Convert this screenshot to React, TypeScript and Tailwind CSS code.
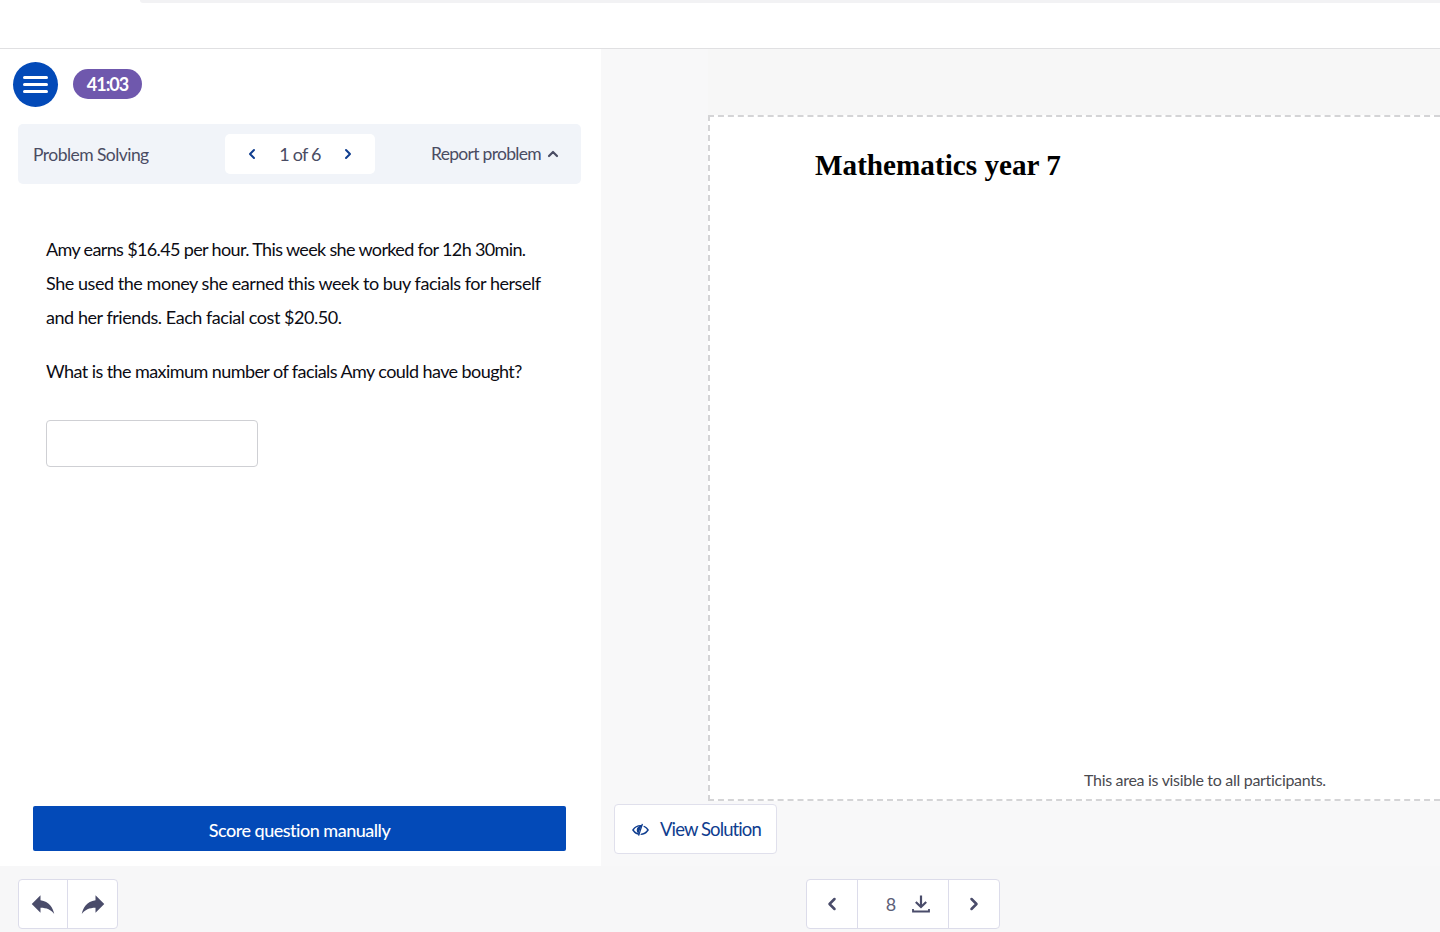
import { ChevronLeft, ChevronRight, ChevronUp } from 'lucide-react'

function EyeOff() {
  return (
    <svg width="17" height="14" viewBox="0 0 18 14" fill="none" className="text-[#0f3d8f]">
      <path d="M1 7c2-3 4.6-4.6 8-4.6S15 4 17 7c-2 3-4.6 4.6-8 4.6S3 10 1 7z" stroke="currentColor" strokeWidth="1.5" />
      <path d="M5 7c0-2.4 2-4.4 5-4.4L6.8 11C5.6 9.8 5 8.5 5 7z" fill="currentColor" />
      <path d="M12.2 1 8 12.5" stroke="white" strokeWidth="1.6" />
      <path d="M11 0.5 7 13" stroke="currentColor" strokeWidth="1.4" />
    </svg>
  )
}

function ReplyArrow({ flip }: { flip?: boolean }) {
  return (
    <svg width="30" height="30" viewBox="0 0 24 24" fill="currentColor" className={flip ? '-scale-x-100' : ''}>
      <path d="M10 9V5l-7 7 7 7v-4.1c5 0 8.5 1.6 11 5.1-1-5-4-10-11-11z" />
    </svg>
  )
}

function DownloadTray() {
  return (
    <svg width="18" height="18" viewBox="0 0 18 18" fill="none" stroke="currentColor">
      <path d="M9 0.5v11" strokeWidth="2.2" />
      <path d="M3.8 7 9 12l5.2-5" strokeWidth="2.2" />
      <path d="M1 14v2.5h16V14" strokeWidth="1.8" />
    </svg>
  )
}

function Sidebar() {
  return (
    <div className="flex h-[817px] w-[601px] shrink-0 flex-col bg-white">
      <div className="flex items-center pl-[13px] pt-[13px]">
        <button type="button" className="flex h-[45px] w-[45px] flex-col items-center justify-center gap-[4px] rounded-full bg-[#034ab8]">
          <span className="h-[3px] w-[25px] rounded-full bg-white" />
          <span className="h-[3px] w-[25px] rounded-full bg-white" />
          <span className="h-[3px] w-[25px] rounded-full bg-white" />
        </button>
        <span className="-mt-px ml-[15px] flex h-[30px] w-[69px] items-center justify-center rounded-full bg-[#6f58ad] text-[18px] font-bold tracking-[-1px] text-white">
          41:03
        </span>
      </div>

      <div className="ml-[18px] mt-[17px] flex h-[60px] w-[563px] items-center rounded-[5px] bg-[#f1f4f9] pl-[15px] pr-[20px] text-[17.5px] text-[#4a4c63]">
        <span className="w-[192px] pt-[2px] tracking-[-0.55px]">Problem Solving</span>
        <div className="flex h-[40px] w-[150px] items-center justify-between rounded-[5px] bg-white px-[19px]">
          <ChevronLeft size={16} strokeWidth={3} className="text-[#0f3d8f]" />
          <span className="text-[18px] tracking-[-0.8px]">1 of 6</span>
          <ChevronRight size={16} strokeWidth={3} className="text-[#0f3d8f]" />
        </div>
        <span className="ml-auto flex items-center gap-[4px] tracking-[-0.7px]">
          Report problem
          <ChevronUp size={16} strokeWidth={3.2} />
        </span>
      </div>

      <div className="pl-[46px] pt-[48px] text-[18px] tracking-[-0.45px] text-[#0c0c14]">
        <p className="leading-[34px]">
          <span className="tracking-[-0.64px]">Amy earns $16.45 per hour. This week she worked for 12h 30min.</span>
          <br />
          She used the money she earned this week to buy facials for herself
          <br />
          and her friends. Each facial cost $20.50.
        </p>
        <p className="mt-[20px] leading-[34px] tracking-[-0.57px]">What is the maximum number of facials Amy could have bought?</p>
        <input type="text" className="mt-[32px] block h-[47px] w-[212px] rounded-[4px] border border-[#cfd0d4] bg-white" />
      </div>

      <button
        type="button"
        className="mb-[15px] ml-[33px] mt-auto h-[45px] w-[533px] rounded-[2px] bg-[#034ab8] pt-[3px] text-[18px] font-medium tracking-[-0.5px] text-white"
      >
        Score question manually
      </button>
    </div>
  )
}

function Canvas() {
  return (
    <div className="flex min-w-0 flex-1 flex-col bg-[#f8f8f9]">
      <div className="ml-[107px] h-[66px] bg-[#f7f7f7]" />
      <div className="ml-[107px] flex h-[686px] flex-col border-2 border-r-0 border-dashed border-[#d4d4d6] bg-white">
        <h1 className="pl-[105px] pt-[30px] font-['Liberation_Serif',serif] text-[29.2px] font-bold leading-[36px] text-black">
          Mathematics year 7
        </h1>
        <p className="mb-[8px] mt-auto pl-[374px] text-[16px] leading-[22px] tracking-[-0.3px] text-[#4a4a4f]">
          This area is visible to all participants.
        </p>
      </div>
      <button
        type="button"
        className="ml-[13px] mt-[3px] flex h-[50px] w-[163px] items-center gap-[11px] rounded-[4px] border border-[#e0e0ec] bg-white pl-[17px] pt-[1px] text-[18.5px] tracking-[-0.9px] text-[#0f3d8f]"
      >
        <EyeOff />
        View Solution
      </button>
    </div>
  )
}

export default function App() {
  return (
    <div className="flex h-[932px] w-[1440px] flex-col overflow-hidden bg-[#f7f7f8] font-['Lato',sans-serif]">
      <header className="h-[49px] shrink-0 border-b border-[#e0e0e2] bg-white">
        <div className="ml-[140px] h-[3px] rounded-bl-[6px] bg-[#f2f2f4]" />
      </header>
      <div className="flex">
        <Sidebar />
        <Canvas />
      </div>
      <div className="flex pt-[13px]">
        <div className="ml-[18px] flex h-[50px] w-[100px] rounded-[4px] border border-[#dcdcea] bg-white text-[#4a4c6a]">
          <button type="button" className="flex w-[49px] items-center justify-center border-r border-[#dcdcea]">
            <ReplyArrow />
          </button>
          <button type="button" className="flex flex-1 items-center justify-center">
            <ReplyArrow flip />
          </button>
        </div>
        <div className="ml-[688px] flex h-[50px] w-[194px] rounded-[4px] border border-[#dcdcea] bg-white text-[#4a4c6a]">
          <button type="button" className="flex w-[51px] items-center justify-center border-r border-[#dcdcea]">
            <ChevronLeft size={20} strokeWidth={3} />
          </button>
          <div className="flex flex-1 items-center justify-center gap-[16px] pl-[10px] text-[18px]">
            <span className="text-[#5d5f78]">8</span>
            <DownloadTray />
          </div>
          <button type="button" className="flex w-[51px] items-center justify-center border-l border-[#dcdcea]">
            <ChevronRight size={20} strokeWidth={3} />
          </button>
        </div>
      </div>
    </div>
  )
}
